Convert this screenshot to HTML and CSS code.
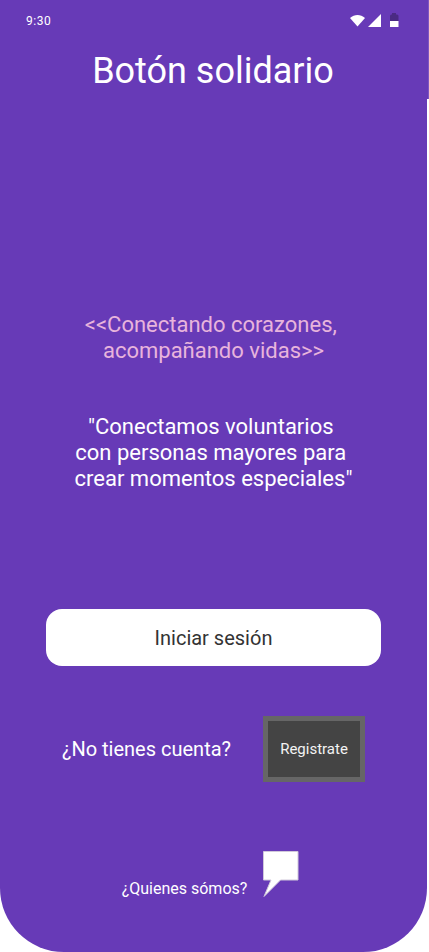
FILE: index.html
```html
<!DOCTYPE html>
<html lang="es">
<head>
<meta charset="utf-8">
<meta name="viewport" content="width=device-width, initial-scale=1">
<title>Botón solidario</title>
<link rel="stylesheet" href="styles.css">
</head>
<body>
<header class="header">
  <div class="status">
    <time class="clock">9:30</time>
    <svg class="status-icons" width="50" height="16" viewBox="0 0 50 16" aria-hidden="true">
      <path fill="#fff" d="M0 5C4.500 .900 10.500 .900 15 5L7.500 13.500Z"/>
      <path fill="#fff" d="M18 14H31V1Z"/>
      <path fill="#4a2a83" d="M40 8V3Q40 1.500 41.500 1.500H42V0H46V1.500H47Q48.500 1.500 48.500 3V8Z"/>
      <path fill="#fff" d="M40 8H48.500V14H40Z"/>
    </svg>
  </div>
  <h1 class="title">Botón solidario</h1>
</header>
<main class="panel">
  <p class="slogan">&lt;&lt;Conectando corazones,&nbsp;<br>acompañando vidas&gt;&gt;</p>
  <p class="mission">"Conectamos voluntarios&nbsp;<br>con personas mayores para&nbsp;<br>crear momentos especiales"</p>
  <button class="login" type="button">Iniciar sesión</button>
  <div class="signup">
    <span class="question">¿No tienes cuenta?</span>
    <button class="register" type="button">Registrate</button>
  </div>
  <a class="about" href="#quienes-somos">
    <span>¿Quienes sómos?</span>
    <svg class="bubble" width="36" height="48" viewBox="0 0 36 48" aria-hidden="true">
      <path fill="#fff" stroke="#d0c8da" stroke-width="1" d="M.500 1.500H35V30H17.500L1 46.500L8 30H.500Z"/>
    </svg>
  </a>
</main>
</body>
</html>
```
FILE: styles.css
```css
* {
  box-sizing: border-box;
}

body {
  margin: 0;
  background: #fff;
  color: #fff;
  font-family: Roboto, sans-serif;
  min-height: 100vh;
  display: flex;
  flex-direction: column;
}

p,
h1 {
  margin: 0;
  font-weight: 400;
}

button {
  font-family: inherit;
  padding: 0;
}

.header {
  background: #673ab7;
  border-right: 1px solid #7d57c1;
  height: 99px;
  padding: 12px 28px 0 26px;
}

.status {
  display: flex;
  justify-content: space-between;
  align-items: center;
  height: 18px;
}

.clock {
  font-size: 12px;
  letter-spacing: 0.5px;
}

.status-icons {
  overflow: visible;
  display: block;
}

.title {
  margin-top: 19px;
  font-size: 36px;
  line-height: 44px;
  text-align: center;
}

.panel {
  flex: 1;
  display: flex;
  flex-direction: column;
  align-items: center;
  margin-right: 2px;
  padding: 213px 46px 52px;
  background: #673ab7;
  border-radius: 0 0 64px 64px;
}

.slogan,
.mission {
  font-size: 22px;
  line-height: 26px;
  text-align: center;
  white-space: nowrap;
}

.slogan {
  color: #e8b4dc;
}

.mission {
  margin-top: 50px;
}

.login {
  width: 100%;
  height: 57px;
  margin-top: 117px;
  border: 0;
  border-radius: 16px;
  background: #fff;
  color: #333;
  font-size: 20px;
}

.signup {
  display: flex;
  align-items: center;
  gap: 32px;
  margin-top: 50px;
}

.question {
  font-size: 20px;
  line-height: 24px;
}

.register {
  width: 102px;
  height: 66px;
  border: 5px solid #666;
  background: #444;
  color: #f3f3f3;
  font-size: 15px;
}

.about {
  display: flex;
  align-items: flex-end;
  gap: 16px;
  margin-top: 68px;
  padding-right: 6px;
  color: #fff;
  font-size: 16px;
  text-decoration: none;
}
```
